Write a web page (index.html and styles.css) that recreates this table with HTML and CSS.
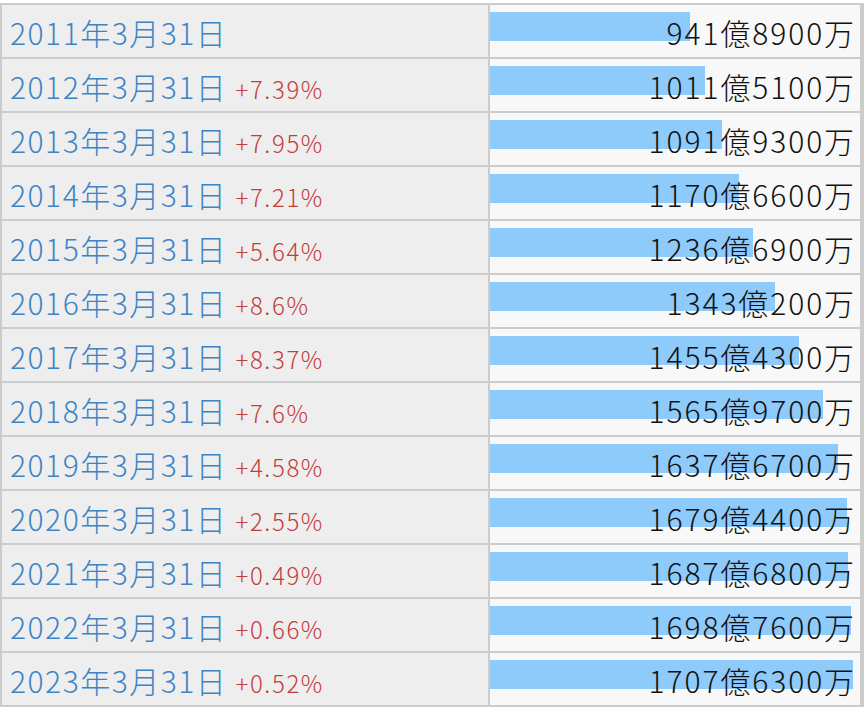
FILE: index.html
```html
<!DOCTYPE html>
<html lang="ja">
<head>
<meta charset="utf-8">
<link rel="stylesheet" href="styles.css">
</head>
<body>
<div class="table">
  <div class="date">2011年3月31日</div>
  <div class="val"><span class="bar" style="width:200.0px"></span><span class="num">941億8900万</span></div>
  <div class="date">2012年3月31日 <span class="pct">+7.39%</span></div>
  <div class="val"><span class="bar" style="width:214.8px"></span><span class="num">1011億5100万</span></div>
  <div class="date">2013年3月31日 <span class="pct">+7.95%</span></div>
  <div class="val"><span class="bar" style="width:231.9px"></span><span class="num">1091億9300万</span></div>
  <div class="date">2014年3月31日 <span class="pct">+7.21%</span></div>
  <div class="val"><span class="bar" style="width:248.6px"></span><span class="num">1170億6600万</span></div>
  <div class="date">2015年3月31日 <span class="pct">+5.64%</span></div>
  <div class="val"><span class="bar" style="width:262.6px"></span><span class="num">1236億6900万</span></div>
  <div class="date">2016年3月31日 <span class="pct">+8.6%</span></div>
  <div class="val"><span class="bar" style="width:285.2px"></span><span class="num">1343億200万</span></div>
  <div class="date">2017年3月31日 <span class="pct">+8.37%</span></div>
  <div class="val"><span class="bar" style="width:309.1px"></span><span class="num">1455億4300万</span></div>
  <div class="date">2018年3月31日 <span class="pct">+7.6%</span></div>
  <div class="val"><span class="bar" style="width:332.6px"></span><span class="num">1565億9700万</span></div>
  <div class="date">2019年3月31日 <span class="pct">+4.58%</span></div>
  <div class="val"><span class="bar" style="width:347.8px"></span><span class="num">1637億6700万</span></div>
  <div class="date">2020年3月31日 <span class="pct">+2.55%</span></div>
  <div class="val"><span class="bar" style="width:356.7px"></span><span class="num">1679億4400万</span></div>
  <div class="date">2021年3月31日 <span class="pct">+0.49%</span></div>
  <div class="val"><span class="bar" style="width:358.4px"></span><span class="num">1687億6800万</span></div>
  <div class="date">2022年3月31日 <span class="pct">+0.66%</span></div>
  <div class="val"><span class="bar" style="width:360.8px"></span><span class="num">1698億7600万</span></div>
  <div class="date">2023年3月31日 <span class="pct">+0.52%</span></div>
  <div class="val"><span class="bar" style="width:362.7px"></span><span class="num">1707億6300万</span></div>
</div>
</body>
</html>
```
FILE: styles.css
```css
html, body {
  margin: 0;
  padding: 0;
  background: #fff;
}
body {
  padding-top: 3px;
  font-family: "Noto Sans CJK JP", "Noto Sans", sans-serif;
  font-weight: 300;
}
.table {
  display: grid;
  grid-template-columns: 486px 370px;
  grid-auto-rows: 52px;
  gap: 2px;
  width: 860px;
  border: 2px solid #ccc;
  background: #ccc;
}
.date {
  background: #eeeeee;
  color: #3d84c6;
  font-size: 30px;
  letter-spacing: 1.5px;
  line-height: 50px;
  padding: 2px 0 0 8px;
  white-space: nowrap;
}
.pct {
  color: #c43c3c;
  font-size: 24px;
  letter-spacing: 1.6px;
}
.val {
  position: relative;
  background: #f8f8f8;
  text-align: right;
  padding: 2px 4px 0 0;
  line-height: 50px;
  font-size: 30px;
  letter-spacing: 1.9px;
  color: #111;
  white-space: nowrap;
}
.bar {
  position: absolute;
  left: 0;
  top: 7px;
  height: 29px;
  background: #8ecafa;
}
.num {
  position: relative;
}
```
